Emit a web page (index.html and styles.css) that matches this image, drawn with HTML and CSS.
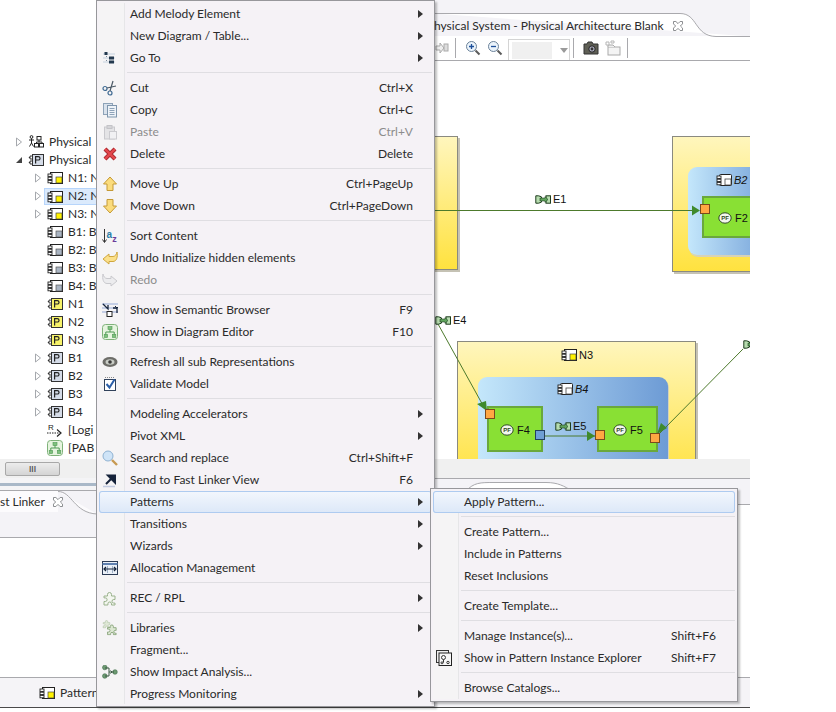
FILE: index.html
```html
<!DOCTYPE html>
<html lang="en">
<head>
    <meta charset="UTF-8">
    <meta name="viewport" content="width=device-width, initial-scale=1.0">
    <title>Physical Architecture Blank</title>
    <link rel="stylesheet" href="styles.css">
</head>
<body>
    <!-- shared icons -->
    <svg class="sprites" width="0" height="0">
        <defs>
            <symbol id="i-comp-node" viewBox="0 0 16 14">
                <rect x="3.5" y="1.5" width="12" height="11" fill="#fff" stroke="#222"/>
                <rect x="9" y="6" width="6" height="6" fill="#fff200" stroke="#444" stroke-width=".7"/>
                <rect x="1" y="3" width="4" height="2.4" fill="#fff" stroke="#222" stroke-width=".9"/>
                <rect x="1" y="6.2" width="4" height="2.4" fill="#fff" stroke="#222" stroke-width=".9"/>
                <rect x="1" y="9.4" width="4" height="2.4" fill="#fff" stroke="#222" stroke-width=".9"/>
            </symbol>
            <symbol id="i-comp-behavior" viewBox="0 0 16 14">
                <rect x="3.5" y="1.5" width="12" height="11" fill="#fff" stroke="#222"/>
                <rect x="9" y="6" width="6" height="6" fill="#a9b4c2" stroke="#555" stroke-width=".7"/>
                <rect x="1" y="3" width="4" height="2.4" fill="#fff" stroke="#222" stroke-width=".9"/>
                <rect x="1" y="6.2" width="4" height="2.4" fill="#fff" stroke="#222" stroke-width=".9"/>
                <rect x="1" y="9.4" width="4" height="2.4" fill="#fff" stroke="#222" stroke-width=".9"/>
            </symbol>
            <symbol id="i-comp-plain" viewBox="0 0 16 14">
                <rect x="3.5" y="1.5" width="12" height="11" rx="1" fill="#fff" stroke="#222"/>
                <rect x="9" y="6" width="6" height="6" fill="#fff" stroke="#444" stroke-width=".8"/>
                <rect x="1" y="3" width="4" height="2.4" fill="#fff" stroke="#222" stroke-width=".9"/>
                <rect x="1" y="6.2" width="4" height="2.4" fill="#fff" stroke="#222" stroke-width=".9"/>
                <rect x="1" y="9.4" width="4" height="2.4" fill="#fff" stroke="#222" stroke-width=".9"/>
            </symbol>
            <symbol id="i-part-yellow" viewBox="0 0 16 14">
                <rect x="4.5" y="1.5" width="11" height="11" fill="#f7f36a" stroke="#333"/>
                <path d="M7.6 10.5V3.6h2.6q1.8 0 1.8 1.7t-1.8 1.7H7.6" fill="none" stroke="#222" stroke-width="1.2"/>
                <path d="M4 3H2v3h2M2 4.5H0.8M4 8H2v3h2M2 9.5H.8" fill="none" stroke="#222" stroke-width=".9"/>
            </symbol>
            <symbol id="i-part-blue" viewBox="0 0 16 14">
                <rect x="4.5" y="1.5" width="11" height="11" fill="#d5dce8" stroke="#333"/>
                <path d="M7.6 10.5V3.6h2.6q1.8 0 1.8 1.7t-1.8 1.7H7.6" fill="none" stroke="#222" stroke-width="1.2"/>
                <path d="M4 3H2v3h2M2 4.5H0.8M4 8H2v3h2M2 9.5H.8" fill="none" stroke="#222" stroke-width=".9"/>
            </symbol>
            <symbol id="i-diagram" viewBox="0 0 16 16">
                <rect x=".5" y=".5" width="15" height="15" rx="3" fill="#e6f4df" stroke="#7fb27a"/>
                <path d="M8 5v3M3.8 11V8h8.4v3" fill="none" stroke="#4f9a55"/>
                <rect x="6" y="2.5" width="4" height="3" fill="#7fc07d" stroke="#4f9a55" stroke-width=".6"/>
                <rect x="2.2" y="10.5" width="3.4" height="3" fill="#7fc07d" stroke="#4f9a55" stroke-width=".6"/>
                <rect x="10.4" y="10.5" width="3.4" height="3" fill="#7fc07d" stroke="#4f9a55" stroke-width=".6"/>
            </symbol>
            <symbol id="i-exchange" viewBox="0 0 16 9">
                <path d="M.8.8H3.500a3.700 3.700 0 0 1 0 7.400H.8Z" fill="#b6dcae" stroke="#1f3d1f"/>
                <rect x="11" y=".8" width="4.500" height="7.400" fill="#b6dcae" stroke="#1f3d1f"/>
                <path d="M5 3h5V1.600L13 4.500 10 7.400V6H5Z" fill="#5fa35c" stroke="#1f3d1f" stroke-width=".6"/>
            </symbol>
            <symbol id="i-pf" viewBox="0 0 14 12">
                <ellipse cx="7" cy="6" rx="6.2" ry="5.2" fill="#f3f7ee" stroke="#2f4a22"/>
                <text x="7" y="8.2" class="pf-text">PF</text>
            </symbol>
            <symbol id="i-close" viewBox="0 0 12 12">
                <path d="M1.5 1.5h2.4L6 3.6 8.1 1.5h2.4v2.4L8.4 6l2.1 2.1v2.4H8.1L6 8.4 3.9 10.5H1.5V8.1L3.6 6 1.5 3.9Z" fill="#fff" stroke="#8b8d90"/>
            </symbol>
            <symbol id="i-tri" viewBox="0 0 8 10">
                <path d="M1.5 1v8l5-4Z" fill="#fff" stroke="#a5a8ad"/>
            </symbol>
            <symbol id="i-puzzle" viewBox="0 0 16 16">
                <path d="M2 6h3.500V4.500a2 2 0 1 1 4 0V6H13v3.500h-1.200a1.800 1.800 0 1 0 0 3.600H13V15H9.500v-1.200a1.800 1.800 0 1 0-3.600 0V15H2v-3.500h1.300a1.800 1.800 0 1 0 0-3.600H2Z"/>
            </symbol>
        </defs>
    </svg>

    <div class="workbench">
        <!-- left side: project tree and bottom views -->
        <div class="left-pane">
            <div class="tree">
                <div class="tree-row lvl-1">
                    <svg class="twisty" width="8" height="10"><use href="#i-tri"/></svg>
                    <svg class="tree-icon" width="16" height="14" viewBox="0 0 16 14">
                        <circle cx="3.5" cy="2" r="1.4" fill="none" stroke="#222"/>
                        <path d="M3.5 3.5V8M1 5h5M3.5 8 1.5 11.5M3.5 8l2 3.5" fill="none" stroke="#222"/>
                        <rect x="9" y="1.5" width="4" height="3.5" fill="#fff" stroke="#222"/>
                        <rect x="6.5" y="8.5" width="4" height="3.5" fill="#fff" stroke="#222"/>
                        <rect x="11.5" y="8.5" width="4" height="3.5" fill="#fff" stroke="#222"/>
                        <path d="M11 5v2M8.5 8.5V7h5.5v1.5" fill="none" stroke="#222"/>
                    </svg>
                    <span>Physical</span>
                </div>
                <div class="tree-row lvl-1">
                    <svg class="twisty" width="8" height="10" viewBox="0 0 8 10"><path d="M1 8h6V2Z" fill="#444"/></svg>
                    <svg class="tree-icon" width="16" height="14"><use href="#i-part-blue"/></svg>
                    <span>Physical</span>
                </div>
                <div class="tree-row lvl-2">
                    <svg class="twisty" width="8" height="10"><use href="#i-tri"/></svg>
                    <svg class="tree-icon" width="16" height="14"><use href="#i-comp-node"/></svg>
                    <span>N1: N</span>
                </div>
                <div class="tree-row lvl-2">
                    <svg class="twisty" width="8" height="10"><use href="#i-tri"/></svg>
                    <div class="tree-selection">
                        <svg class="tree-icon" width="16" height="14"><use href="#i-comp-node"/></svg>
                        <span>N2: N</span>
                    </div>
                </div>
                <div class="tree-row lvl-2">
                    <svg class="twisty" width="8" height="10"><use href="#i-tri"/></svg>
                    <svg class="tree-icon" width="16" height="14"><use href="#i-comp-node"/></svg>
                    <span>N3: N</span>
                </div>
                <div class="tree-row lvl-2 no-twisty">
                    <svg class="tree-icon" width="16" height="14"><use href="#i-comp-behavior"/></svg>
                    <span>B1: B</span>
                </div>
                <div class="tree-row lvl-2 no-twisty">
                    <svg class="tree-icon" width="16" height="14"><use href="#i-comp-behavior"/></svg>
                    <span>B2: B</span>
                </div>
                <div class="tree-row lvl-2 no-twisty">
                    <svg class="tree-icon" width="16" height="14"><use href="#i-comp-behavior"/></svg>
                    <span>B3: B</span>
                </div>
                <div class="tree-row lvl-2 no-twisty">
                    <svg class="tree-icon" width="16" height="14"><use href="#i-comp-behavior"/></svg>
                    <span>B4: B</span>
                </div>
                <div class="tree-row lvl-2 no-twisty">
                    <svg class="tree-icon" width="16" height="14"><use href="#i-part-yellow"/></svg>
                    <span>N1</span>
                </div>
                <div class="tree-row lvl-2 no-twisty">
                    <svg class="tree-icon" width="16" height="14"><use href="#i-part-yellow"/></svg>
                    <span>N2</span>
                </div>
                <div class="tree-row lvl-2 no-twisty">
                    <svg class="tree-icon" width="16" height="14"><use href="#i-part-yellow"/></svg>
                    <span>N3</span>
                </div>
                <div class="tree-row lvl-2">
                    <svg class="twisty" width="8" height="10"><use href="#i-tri"/></svg>
                    <svg class="tree-icon" width="16" height="14"><use href="#i-part-blue"/></svg>
                    <span>B1</span>
                </div>
                <div class="tree-row lvl-2">
                    <svg class="twisty" width="8" height="10"><use href="#i-tri"/></svg>
                    <svg class="tree-icon" width="16" height="14"><use href="#i-part-blue"/></svg>
                    <span>B2</span>
                </div>
                <div class="tree-row lvl-2">
                    <svg class="twisty" width="8" height="10"><use href="#i-tri"/></svg>
                    <svg class="tree-icon" width="16" height="14"><use href="#i-part-blue"/></svg>
                    <span>B3</span>
                </div>
                <div class="tree-row lvl-2">
                    <svg class="twisty" width="8" height="10"><use href="#i-tri"/></svg>
                    <svg class="tree-icon" width="16" height="14"><use href="#i-part-blue"/></svg>
                    <span>B4</span>
                </div>
                <div class="tree-row lvl-2 no-twisty">
                    <svg class="tree-icon" width="16" height="14" viewBox="0 0 16 14">
                        <text x="1" y="7" class="rep-text">R</text>
                        <path d="M0 10h12" fill="none" stroke="#222" stroke-dasharray="1.5 1"/>
                        <path d="M10 6.5l4 3.5-4 3.500" fill="none" stroke="#222" stroke-width="1.2"/>
                    </svg>
                    <span>[Logi</span>
                </div>
                <div class="tree-row lvl-2 no-twisty">
                    <svg class="tree-icon" width="16" height="16"><use href="#i-diagram"/></svg>
                    <span>[PAB</span>
                </div>
            </div>
            <div class="tree-scroll">
                <div class="scroll-thumb"><span>III</span></div>
            </div>
            <div class="sash"></div>
            <div class="view-tabs">
                <div class="view-tab">
                    <span class="view-tab-label">st Linker</span>
                    <svg class="close-x" width="12" height="12"><use href="#i-close"/></svg>
                    <svg class="view-tab-curve" width="40" height="24" viewBox="0 0 40 24">
                        <path d="M0 .5C14 .5 16 22 39 23" fill="#fcfbfd" stroke="#a9a9ad"/>
                    </svg>
                </div>
            </div>
            <div class="view-body"></div>
            <div class="status-tabs">
                <svg class="tree-icon" width="16" height="14"><use href="#i-comp-node"/></svg>
                <span>Pattern</span>
            </div>
        </div>

        <!-- right side: diagram editor -->
        <div class="editor-pane">
            <div class="editor-tabbar">
                <span class="editor-tab-label">hysical System - Physical Architecture Blank</span>
                <svg class="close-x" width="12" height="12"><use href="#i-close"/></svg>
                <svg class="editor-tab-curve" width="316" height="24" viewBox="0 0 316 24">
                    <path d="M0 .5H246C264 .5 260 23 282 23.500H316" fill="#fff" stroke="#a9a9ad"/>
                </svg>
            </div>
            <div class="toolbar">
                <svg class="tool" width="14" height="14" viewBox="0 0 14 14">
                    <path d="M1 5h4V2l4 5-4 5V9H1Z" fill="#eee" stroke="#aaa"/>
                    <rect x="9" y="3" width="4" height="7" fill="#ddd" stroke="#aaa"/>
                </svg>
                <span class="tool-sep"></span>
                <svg class="tool" width="16" height="16" viewBox="0 0 16 16">
                    <circle cx="6.500" cy="6.500" r="5" fill="#eaf3fb" stroke="#6b8299"/>
                    <path d="M4 6.500h5M6.500 4v5" stroke="#1d4f9a" stroke-width="1.300"/>
                    <path d="M10.500 10.500l4 4" stroke="#5a5a5a" stroke-width="2"/>
                </svg>
                <svg class="tool" width="16" height="16" viewBox="0 0 16 16">
                    <circle cx="6.500" cy="6.500" r="5" fill="#eaf3fb" stroke="#6b8299"/>
                    <path d="M4 6.500h5" stroke="#1d4f9a" stroke-width="1.300"/>
                    <path d="M10.500 10.500l4 4" stroke="#5a5a5a" stroke-width="2"/>
                </svg>
                <div class="zoom-combo">
                    <span class="zoom-field"></span>
                    <svg width="8" height="5" viewBox="0 0 8 5"><path d="M0 0h8L4 5Z" fill="#9a9a9a"/></svg>
                </div>
                <span class="tool-sep"></span>
                <svg class="tool" width="16" height="14" viewBox="0 0 16 14">
                    <path d="M1 3h3l1-2h4l1 2h5v10H1Z" fill="#5f5f55" stroke="#333"/>
                    <circle cx="9" cy="8" r="3.200" fill="#aab" stroke="#222"/>
                    <circle cx="9" cy="8" r="1.400" fill="#333"/>
                </svg>
                <svg class="tool" width="16" height="16" viewBox="0 0 16 16">
                    <rect x="3" y="7" width="12" height="8" fill="#f4f4f4" stroke="#aaa"/>
                    <path d="M3 7V5h5l2 2" fill="#eee" stroke="#aaa"/>
                    <path d="M1 2h3v3H1ZM6 1h3v2H6Z" fill="#fff" stroke="#b5b5b5"/>
                </svg>
                <span class="tool-sep"></span>
            </div>

            <!-- diagram: items sit at their canvas coordinates -->
            <div class="canvas">
                <div class="node node-n1"></div>
                <div class="node node-n2">
                    <div class="behavior behavior-b2"></div>
                </div>
                <div class="node node-n3"></div>
                <div class="behavior behavior-b4"></div>
                <div class="func func-f2"></div>
                <div class="func func-f4"></div>
                <div class="func func-f5"></div>

                <svg class="links" width="316" height="400" viewBox="0 0 316 400">
                    <path d="M0 149.500H260" fill="none" stroke="#4d7a2c" stroke-width="1.200"/>
                    <path d="M258 144.500l8 5-8 5Z" fill="#3f8a2c"/>
                    <path d="M4 263L51 348" fill="none" stroke="#4d7a2c"/>
                    <path d="M43 343l9 -3 1 10Z" fill="#3f8a2c"/>
                    <path d="M111 375H161" fill="none" stroke="#4d7a2c"/>
                    <path d="M153 370l8 5-8 5Z" fill="#3f8a2c"/>
                    <path d="M309 288L226 372" fill="none" stroke="#4d7a2c"/>
                    <path d="M227 362l6 5-10 6Z" fill="#3f8a2c"/>
                </svg>

                <span class="port port-orange port-f2"></span>
                <span class="port port-orange port-f4"></span>
                <span class="port port-blue port-f4-out"></span>
                <span class="port port-orange port-f5-in"></span>
                <span class="port port-orange port-f5-out"></span>

                <div class="tag tag-e1"><svg width="16" height="9"><use href="#i-exchange"/></svg>E1</div>
                <div class="tag tag-e4"><svg width="16" height="9"><use href="#i-exchange"/></svg>E4</div>
                <div class="tag tag-e5"><svg width="16" height="9"><use href="#i-exchange"/></svg>E5</div>
                <div class="tag tag-edge"><svg width="16" height="9"><use href="#i-exchange"/></svg></div>
                <div class="tag tag-n3"><svg width="16" height="14"><use href="#i-comp-node"/></svg>N3</div>
                <div class="tag tag-b2"><svg width="16" height="14"><use href="#i-comp-plain"/></svg><em>B2</em></div>
                <div class="tag tag-b4"><svg width="16" height="14"><use href="#i-comp-plain"/></svg><em>B4</em></div>
                <div class="tag tag-f2"><svg width="14" height="12"><use href="#i-pf"/></svg>F2</div>
                <div class="tag tag-f4"><svg width="14" height="12"><use href="#i-pf"/></svg>F4</div>
                <div class="tag tag-f5"><svg width="14" height="12"><use href="#i-pf"/></svg>F5</div>
            </div>
            <div class="editor-scroll"></div>
            <div class="lower-tabs">
                <svg class="lower-tab-arc" width="316" height="24" viewBox="0 0 316 24">
                    <path d="M32 9C40 .5 46 .5 60 .5H112C124 .5 130 4 138 9" fill="#fff" stroke="#a9a9ad"/>
                </svg>
            </div>
            <div class="lower-body"></div>
            <div class="status-tabs"></div>
        </div>
    </div>

    <!-- context menu -->
    <div class="menu menu-main">
        <div class="menu-row"><span class="menu-icon"></span><span class="menu-label">Add Melody Element</span><span class="menu-arrow"></span></div>
        <div class="menu-row"><span class="menu-icon"></span><span class="menu-label">New Diagram / Table...</span><span class="menu-arrow"></span></div>
        <div class="menu-row">
            <span class="menu-icon">
                <svg width="16" height="16" viewBox="0 0 16 16">
                    <path d="M4.500 2v11" stroke="#7b8a99" stroke-dasharray="1 1"/>
                    <path d="M1 4h12M1 8h12M1 12h12" stroke="#dde3ea" stroke-width="2"/>
                    <rect x="2.500" y="2" width="3" height="3" fill="#23394e"/>
                    <rect x="7" y="6.500" width="5" height="3" fill="#23394e"/>
                    <rect x="7" y="10.500" width="5" height="3" fill="#23394e"/>
                </svg>
            </span>
            <span class="menu-label">Go To</span><span class="menu-arrow"></span>
        </div>
        <div class="menu-sep"></div>
        <div class="menu-row">
            <span class="menu-icon">
                <svg width="16" height="16" viewBox="0 0 16 16">
                    <circle cx="3" cy="8.500" r="2" fill="none" stroke="#3f6a92" stroke-width="1.200"/>
                    <circle cx="8" cy="13" r="2" fill="none" stroke="#3f6a92" stroke-width="1.200"/>
                    <path d="M5 8 14 6M8 11 11 1" fill="none" stroke="#4c5a66" stroke-width="1.200"/>
                </svg>
            </span>
            <span class="menu-label">Cut</span><span class="menu-key">Ctrl+X</span>
        </div>
        <div class="menu-row">
            <span class="menu-icon">
                <svg width="16" height="16" viewBox="0 0 16 16">
                    <rect x="1.500" y="1.500" width="9" height="11" fill="#d9e2ec" stroke="#8ea3b8"/>
                    <rect x="5.500" y="3.500" width="9" height="11.500" fill="#eef3f8" stroke="#7f96ad"/>
                    <path d="M7.500 6.500h5M7.500 8.500h5M7.500 10.500h5M7.500 12.500h5" stroke="#8ea3b8"/>
                </svg>
            </span>
            <span class="menu-label">Copy</span><span class="menu-key">Ctrl+C</span>
        </div>
        <div class="menu-row is-disabled">
            <span class="menu-icon">
                <svg width="16" height="16" viewBox="0 0 16 16">
                    <rect x="2.500" y="3" width="10" height="12" fill="#e4e4e6" stroke="#c9c9cd"/>
                    <rect x="5" y="1.500" width="5" height="3" fill="#d5d5d8" stroke="#c4c4c8"/>
                    <rect x="7.500" y="7.500" width="7" height="7.500" fill="#f1f1f3" stroke="#cbcbcf"/>
                </svg>
            </span>
            <span class="menu-label">Paste</span><span class="menu-key">Ctrl+V</span>
        </div>
        <div class="menu-row">
            <span class="menu-icon">
                <svg width="16" height="16" viewBox="0 0 16 16">
                    <path d="M3 3l10 10M13 3 3 13" stroke="#a92a2f" stroke-width="4.200"/>
                    <path d="M3 3l10 10M13 3 3 13" stroke="#e5484d" stroke-width="2.400"/>
                </svg>
            </span>
            <span class="menu-label">Delete</span><span class="menu-key">Delete</span>
        </div>
        <div class="menu-sep"></div>
        <div class="menu-row">
            <span class="menu-icon">
                <svg width="16" height="16" viewBox="0 0 16 16">
                    <path d="M8 1 14.500 8H11v6.500H5V8H1.500Z" fill="#fbdc7c" stroke="#c59a35"/>
                </svg>
            </span>
            <span class="menu-label">Move Up</span><span class="menu-key">Ctrl+PageUp</span>
        </div>
        <div class="menu-row">
            <span class="menu-icon">
                <svg width="16" height="16" viewBox="0 0 16 16">
                    <path d="M8 15 14.500 8H11V1.500H5V8H1.500Z" fill="#fbdc7c" stroke="#c59a35"/>
                </svg>
            </span>
            <span class="menu-label">Move Down</span><span class="menu-key">Ctrl+PageDown</span>
        </div>
        <div class="menu-sep"></div>
        <div class="menu-row">
            <span class="menu-icon">
                <svg width="16" height="16" viewBox="0 0 16 16">
                    <path d="M2.500 1v13M.5 11.500l2 3 2-3" fill="none" stroke="#333"/>
                    <text x="4.500" y="9.500" class="sort-a">a</text>
                    <text x="10.200" y="14" class="sort-z">z</text>
                </svg>
            </span>
            <span class="menu-label">Sort Content</span>
        </div>
        <div class="menu-row">
            <span class="menu-icon">
                <svg width="16" height="16" viewBox="0 0 16 16">
                    <path d="M1 9 7 4V6.500H11C13 6.500 14.500 4.500 15 2 16 7 14.500 11.500 11 11.500H7V14Z" fill="#fbe08a" stroke="#d0a73e"/>
                </svg>
            </span>
            <span class="menu-label">Undo Initialize hidden elements</span>
        </div>
        <div class="menu-row is-disabled">
            <span class="menu-icon">
                <svg width="16" height="16" viewBox="0 0 16 16">
                    <path d="M15 9 9 4V6.500H5C3 6.500 1.500 4.500 1 2 0 7 1.500 11.500 5 11.500H9V14Z" fill="#ececee" stroke="#c9c9cd"/>
                </svg>
            </span>
            <span class="menu-label">Redo</span>
        </div>
        <div class="menu-sep"></div>
        <div class="menu-row">
            <span class="menu-icon">
                <svg width="16" height="16" viewBox="0 0 16 16">
                    <path d="M0 2h16M0 6h16M0 10h16" stroke="#c5cfe6" stroke-width="2"/>
                    <rect x="5" y="9.500" width="5" height="5" fill="#fff" stroke="#222"/>
                    <path d="M1 2l5 5V3M15 11V6h-4" fill="none" stroke="#17263d" stroke-width="1.300"/>
                    <path d="M13 4l2 2 1-1" fill="none" stroke="#17263d"/>
                </svg>
            </span>
            <span class="menu-label">Show in Semantic Browser</span><span class="menu-key">F9</span>
        </div>
        <div class="menu-row">
            <span class="menu-icon"><svg width="16" height="16"><use href="#i-diagram"/></svg></span>
            <span class="menu-label">Show in Diagram Editor</span><span class="menu-key">F10</span>
        </div>
        <div class="menu-sep"></div>
        <div class="menu-row">
            <span class="menu-icon">
                <svg width="16" height="16" viewBox="0 0 16 16">
                    <ellipse cx="8" cy="8" rx="7.500" ry="5" fill="#6d6d68"/>
                    <ellipse cx="8" cy="8" rx="4.500" ry="2.800" fill="#c9cdc6"/>
                    <circle cx="8" cy="8" r="1.800" fill="#3a3a38"/>
                </svg>
            </span>
            <span class="menu-label">Refresh all sub Representations</span>
        </div>
        <div class="menu-row">
            <span class="menu-icon">
                <svg width="16" height="16" viewBox="0 0 16 16">
                    <rect x="2.500" y="3.500" width="11" height="11" fill="#fff" stroke="#30415a"/>
                    <path d="M3 1.500h10" stroke="#888" stroke-dasharray="1 1"/>
                    <path d="M4.500 8l3 3.500 5-8" fill="none" stroke="#2c5fa8" stroke-width="2"/>
                </svg>
            </span>
            <span class="menu-label">Validate Model</span>
        </div>
        <div class="menu-sep"></div>
        <div class="menu-row"><span class="menu-icon"></span><span class="menu-label">Modeling Accelerators</span><span class="menu-arrow"></span></div>
        <div class="menu-row"><span class="menu-icon"></span><span class="menu-label">Pivot XML</span><span class="menu-arrow"></span></div>
        <div class="menu-row">
            <span class="menu-icon">
                <svg width="16" height="16" viewBox="0 0 16 16">
                    <circle cx="6" cy="6" r="5" fill="#cfe4f7" stroke="#8fb2d2"/>
                    <path d="M10 10l5 5" stroke="#c79a52" stroke-width="2.400"/>
                </svg>
            </span>
            <span class="menu-label">Search and replace</span><span class="menu-key">Ctrl+Shift+F</span>
        </div>
        <div class="menu-row">
            <span class="menu-icon">
                <svg width="16" height="16" viewBox="0 0 16 16">
                    <path d="M4 12 11 5M6 3.500h7v7Z" fill="#16233a" stroke="#16233a" stroke-width="2"/>
                    <path d="M1 14.500h12" stroke="#c2cbe0" stroke-width="1.500"/>
                </svg>
            </span>
            <span class="menu-label">Send to Fast Linker View</span><span class="menu-key">F6</span>
        </div>
        <div class="menu-row is-active"><span class="menu-icon"></span><span class="menu-label">Patterns</span><span class="menu-arrow"></span></div>
        <div class="menu-row"><span class="menu-icon"></span><span class="menu-label">Transitions</span><span class="menu-arrow"></span></div>
        <div class="menu-row"><span class="menu-icon"></span><span class="menu-label">Wizards</span><span class="menu-arrow"></span></div>
        <div class="menu-row">
            <span class="menu-icon">
                <svg width="16" height="14" viewBox="0 0 16 14">
                    <rect x=".5" y=".5" width="15" height="13" fill="#eaf0f8" stroke="#2b3a55"/>
                    <path d="M.5 3h15" stroke="#5f80b0" stroke-width="2"/>
                    <path d="M5.500 5v7M10.500 5v7" stroke="#9fb1c8"/>
                    <path d="M2 8h12M4 6 2 8l2 2M12 6l2 2-2 2" fill="none" stroke="#15233a" stroke-width="1.200"/>
                </svg>
            </span>
            <span class="menu-label">Allocation Management</span>
        </div>
        <div class="menu-sep"></div>
        <div class="menu-row">
            <span class="menu-icon">
                <svg class="puzzle-rec" width="16" height="16"><use href="#i-puzzle"/></svg>
            </span>
            <span class="menu-label">REC / RPL</span><span class="menu-arrow"></span>
        </div>
        <div class="menu-sep"></div>
        <div class="menu-row">
            <span class="menu-icon">
                <svg width="16" height="16" viewBox="0 0 16 16">
                    <g class="puzzle-lib-back" transform="translate(0 -1) scale(.6)"><use href="#i-puzzle" width="16" height="16"/></g>
                    <g class="puzzle-lib" transform="translate(4 3) scale(.78)"><use href="#i-puzzle" width="16" height="16"/></g>
                </svg>
            </span>
            <span class="menu-label">Libraries</span><span class="menu-arrow"></span>
        </div>
        <div class="menu-row"><span class="menu-icon"></span><span class="menu-label">Fragment...</span></div>
        <div class="menu-row">
            <span class="menu-icon">
                <svg width="16" height="14" viewBox="0 0 16 14">
                    <circle cx="2.800" cy="2.500" r="2.300" fill="#6d9a72" stroke="#3f6b48" stroke-width=".6"/>
                    <circle cx="2.800" cy="11" r="2.300" fill="#6d9a72" stroke="#3f6b48" stroke-width=".6"/>
                    <circle cx="13" cy="7" r="2.300" fill="#6d9a72" stroke="#3f6b48" stroke-width=".6"/>
                    <path d="M3 3H7V11H3M7 7h5M8.500 5.500 10 7 8.500 8.500" fill="none" stroke="#3c5a44"/>
                </svg>
            </span>
            <span class="menu-label">Show Impact Analysis...</span>
        </div>
        <div class="menu-row"><span class="menu-icon"></span><span class="menu-label">Progress Monitoring</span><span class="menu-arrow"></span></div>
    </div>

    <!-- Patterns submenu -->
    <div class="menu menu-sub">
        <div class="menu-row is-active"><span class="menu-icon"></span><span class="menu-label">Apply Pattern...</span></div>
        <div class="menu-sep"></div>
        <div class="menu-row"><span class="menu-icon"></span><span class="menu-label">Create Pattern...</span></div>
        <div class="menu-row"><span class="menu-icon"></span><span class="menu-label">Include in Patterns</span></div>
        <div class="menu-row"><span class="menu-icon"></span><span class="menu-label">Reset Inclusions</span></div>
        <div class="menu-sep"></div>
        <div class="menu-row"><span class="menu-icon"></span><span class="menu-label">Create Template...</span></div>
        <div class="menu-sep"></div>
        <div class="menu-row"><span class="menu-icon"></span><span class="menu-label">Manage Instance(s)...</span><span class="menu-key">Shift+F6</span></div>
        <div class="menu-row">
            <span class="menu-icon">
                <svg width="16" height="16" viewBox="0 0 16 16">
                    <rect x=".5" y=".5" width="12" height="12" fill="#eee" stroke="#333"/>
                    <rect x="3" y="3" width="12.500" height="12.500" fill="#f6f6f6" stroke="#222"/>
                    <circle cx="7.500" cy="7.500" r="2" fill="none" stroke="#333"/>
                    <path d="M7.500 9.500v3" stroke="#333"/>
                    <circle cx="12" cy="12.500" r="1.200" fill="none" stroke="#333"/>
                    <circle cx="6" cy="12.800" r="1" fill="none" stroke="#333"/>
                </svg>
            </span>
            <span class="menu-label">Show in Pattern Instance Explorer</span><span class="menu-key">Shift+F7</span>
        </div>
        <div class="menu-sep"></div>
        <div class="menu-row"><span class="menu-icon"></span><span class="menu-label">Browse Catalogs...</span></div>
    </div>
</body>
</html>
```

FILE: styles.css
```css
* {
    margin: 0;
    padding: 0;
    box-sizing: border-box;
}

body {
    position: relative;
    width: 836px;
    height: 712px;
    overflow: hidden;
    background: white;
    font-family: Lato, "Open Sans", Arial, sans-serif;
    font-size: 12px;
    color: #2a2a2a;
}

.sprites {
    position: absolute;
}

.pf-text {
    font-family: "Liberation Sans", sans-serif;
    font-size: 6px;
    font-weight: bold;
    text-anchor: middle;
    fill: #2f4a22;
}

.rep-text {
    font-family: "Liberation Sans", sans-serif;
    font-size: 8px;
    fill: #222;
}

.sort-a {
    font-family: "Liberation Sans", sans-serif;
    font-size: 10px;
    font-weight: bold;
    fill: #2a7fa8;
}

.sort-z {
    font-family: "Liberation Sans", sans-serif;
    font-size: 9px;
    font-weight: bold;
    fill: #6a3a9a;
}

.puzzle-rec {
    fill: #f3f6ef;
    stroke: #9ab28c;
}

.puzzle-lib-back {
    fill: #dfe8d6;
    stroke: #b3c4a8;
}

.puzzle-lib {
    fill: #dce7d2;
    stroke: #7b9a6c;
}

.workbench {
    display: flex;
    width: 750px;
    height: 708px;
    border-bottom: 1px solid #4a4a4a;
}

.left-pane {
    display: flex;
    flex-direction: column;
    width: 434px;
    height: 707px;
}

.editor-pane {
    display: flex;
    flex-direction: column;
    width: 316px;
    height: 707px;
}

/* tree */
.tree {
    height: 459px;
    padding-top: 133px;
    background: white;
}

.tree-row {
    display: flex;
    align-items: center;
    height: 18px;
    white-space: nowrap;
}

.tree-row span {
    line-height: 14px;
    padding-bottom: 1px;
}

.lvl-1 {
    padding-left: 15px;
}

.lvl-2 {
    padding-left: 34px;
}

.no-twisty {
    padding-left: 47px;
}

.twisty {
    margin-right: 5px;
    flex: none;
}

.tree-icon {
    flex: none;
    margin-right: 5px;
}

.tree-selection {
    display: flex;
    align-items: center;
    width: 60px;
    height: 15px;
    margin: 1px 0 0 -2px;
    padding-left: 2px;
    background: #dbeafc;
    outline: 1px solid #b7d5fb;
}

.tree-scroll {
    height: 19px;
    padding: 3px 0 0 5px;
    background: #f0f0f0;
}

.scroll-thumb {
    width: 55px;
    height: 14px;
    line-height: 12px;
    text-align: center;
    font-size: 8px;
    font-weight: bold;
    color: #555;
    background: linear-gradient(#ececec, #d4d4d4);
    border: 1px solid #a8a8a8;
    border-radius: 2px;
}

.sash {
    height: 12px;
    background: linear-gradient(#f4f4f6 0, #f4f4f6 5px, #a9b8c8 5px, #a9b8c8 8px, #f4f4f6 8px);
}

.view-tabs {
    height: 48px;
    background: #f4f3f7;
    border-top: 1px solid #a9a9ad;
    border-bottom: 1px solid #a9a9ad;
}

.view-tab {
    position: relative;
    display: flex;
    align-items: center;
    gap: 7px;
    width: 58px;
    height: 21px;
    background: #fcfbfd;
    white-space: nowrap;
}

.view-tab-curve {
    position: absolute;
    left: 58px;
    top: 0;
}

.close-x {
    flex: none;
}

.view-body {
    flex: 1;
    background: white;
}

.status-tabs {
    display: flex;
    align-items: center;
    height: 30px;
    padding-left: 39px;
    background: #f5f4f7;
    border-top: 1px solid #a9a9ad;
}

/* editor */
.editor-tabbar {
    position: relative;
    display: flex;
    align-items: center;
    gap: 8px;
    height: 36px;
    padding-top: 15px;
    background: #f4f3f7;
    white-space: nowrap;
}

.editor-tab-curve {
    position: absolute;
    left: 0;
    top: 13px;
}

.editor-tab-label,
.editor-tabbar .close-x {
    position: relative;
    z-index: 1;
}

.toolbar {
    display: flex;
    align-items: center;
    height: 25px;
    padding-left: 1px;
    gap: 6px;
    background: white;
    border-bottom: 1px solid #a9a9ad;
}

.tool-sep {
    width: 1px;
    height: 20px;
    margin-right: 3px;
    background: #a9a9ad;
}

.zoom-combo {
    display: flex;
    align-items: center;
    gap: 8px;
    width: 62px;
    height: 21px;
    margin: 3px -3px 0 -1px;
    padding-left: 3px;
    border: 1px solid #d4d4d4;
    border-bottom: none;
}

.zoom-field {
    display: block;
    width: 40px;
    height: 17px;
    background: #f0f0f0;
}

/* canvas */
.canvas {
    position: relative;
    height: 398px;
    overflow: hidden;
    background: white;
    font-family: "Liberation Sans", Arial, sans-serif;
    font-size: 11px;
    color: #111;
}

.node {
    position: absolute;
    background: linear-gradient(#fff6bd, #ffe23f);
    border: 1px solid #8a8a80;
    box-shadow: 2px 2px 0 #c5c2b4;
}

.node-n1 {
    left: -20px;
    top: 75px;
    width: 44px;
    height: 134px;
}

.node-n2 {
    left: 238px;
    top: 75px;
    width: 100px;
    height: 136px;
}

.node-n3 {
    left: 23px;
    top: 280px;
    width: 239px;
    height: 140px;
}

.behavior {
    position: absolute;
    border-radius: 9px;
    background: linear-gradient(90deg, #c4e7fb, #6d9bd5);
    box-shadow: 1px 2px 0 #d6d2b8;
}

.behavior-b2 {
    left: 15px;
    top: 30px;
    width: 90px;
    height: 88px;
}

.behavior-b4 {
    left: 44px;
    top: 316px;
    width: 190px;
    height: 100px;
}

.func {
    position: absolute;
    background: #89e034;
    border: 2px solid #6aa83c;
}

.func-f2 {
    left: 268px;
    top: 135px;
    width: 60px;
    height: 42px;
}

.func-f4 {
    left: 53px;
    top: 345px;
    width: 56px;
    height: 46px;
}

.func-f5 {
    left: 163px;
    top: 345px;
    width: 61px;
    height: 46px;
}

.links {
    position: absolute;
    left: 0;
    top: 0;
}

.port {
    position: absolute;
    width: 10px;
    height: 10px;
    border: 1px solid #7a4a1c;
}

.port-orange {
    background: #ffa843;
}

.port-blue {
    background: #6e9fd4;
    border-color: #23405f;
}

.port-f2 {
    left: 266px;
    top: 143px;
}

.port-f4 {
    left: 51px;
    top: 348px;
}

.port-f4-out {
    left: 101px;
    top: 369px;
}

.port-f5-in {
    left: 161px;
    top: 369px;
}

.port-f5-out {
    left: 216px;
    top: 372px;
}

.tag {
    position: absolute;
    display: flex;
    align-items: center;
    gap: 2px;
    height: 14px;
    white-space: nowrap;
}

.tag-e1 { left: 101px; top: 131px; }
.tag-e4 { left: 1px; top: 252px; }
.tag-e5 { left: 121px; top: 358px; }
.tag-edge { left: 309px; top: 276px; }
.tag-n3 { left: 127px; top: 287px; }
.tag-b2 { left: 282px; top: 112px; }
.tag-b4 { left: 123px; top: 321px; }
.tag-f2 { left: 284px; top: 150px; gap: 3px; }
.tag-f4 { left: 66px; top: 362px; gap: 3px; }
.tag-f5 { left: 179px; top: 362px; gap: 3px; }

.editor-scroll {
    height: 20px;
    background: #f0f0f0;
    border-bottom: 1px solid #a9a9ad;
}

.lower-tabs {
    position: relative;
    height: 26px;
    background: #f4f3f7;
    border-bottom: 1px solid #a9a9ad;
}

.lower-tab-arc {
    position: absolute;
    left: 0;
    top: 3px;
}

.lower-body {
    flex: 1;
    background: white;
}

.editor-pane .status-tabs {
    padding-left: 0;
}

/* menus */
.menu {
    position: absolute;
    display: flex;
    flex-direction: column;
    padding: 2px;
    background: linear-gradient(90deg, #f5f4f5 0, #f5f4f5 25px, #e6e6e8 25px, #e6e6e8 26px, #f5f2f6 26px);
    background-origin: content-box;
    background-repeat: no-repeat;
    background-color: #f5f2f6;
    border: 1px solid #97979b;
    box-shadow: 2px 2px 2px rgba(0,0,0,0.25);
}

.menu-main {
    left: 96px;
    top: 0;
    width: 339px;
    height: 707px;
}

.menu-sub {
    left: 430px;
    top: 488px;
    width: 308px;
    height: 214px;
}

.menu-row {
    display: flex;
    align-items: center;
    flex: none;
    height: 22px;
    padding-right: 19px;
    white-space: nowrap;
}

.menu-icon {
    display: flex;
    align-items: center;
    justify-content: center;
    flex: none;
    width: 22px;
    margin-right: 9px;
}

.menu-label {
    flex: 1;
    padding-bottom: 2px;
}

.menu-key {
    flex: none;
    padding-bottom: 2px;
}

.menu-arrow {
    width: 0;
    height: 0;
    margin-right: -10px;
    border-top: 4px solid transparent;
    border-bottom: 4px solid transparent;
    border-left: 5px solid #333;
}

.menu-sep {
    flex: none;
    height: 8px;
    margin-left: 28px;
    background: linear-gradient(transparent 3px, #dfdee2 3px, #dfdee2 4px, transparent 4px);
}

.is-disabled {
    color: #8c8c8c;
}

.is-active {
    background: linear-gradient(#f3f7fd, #dce8f8);
    box-shadow: inset 0 0 0 1px #aecbf0;
    border-radius: 3px;
}
```
